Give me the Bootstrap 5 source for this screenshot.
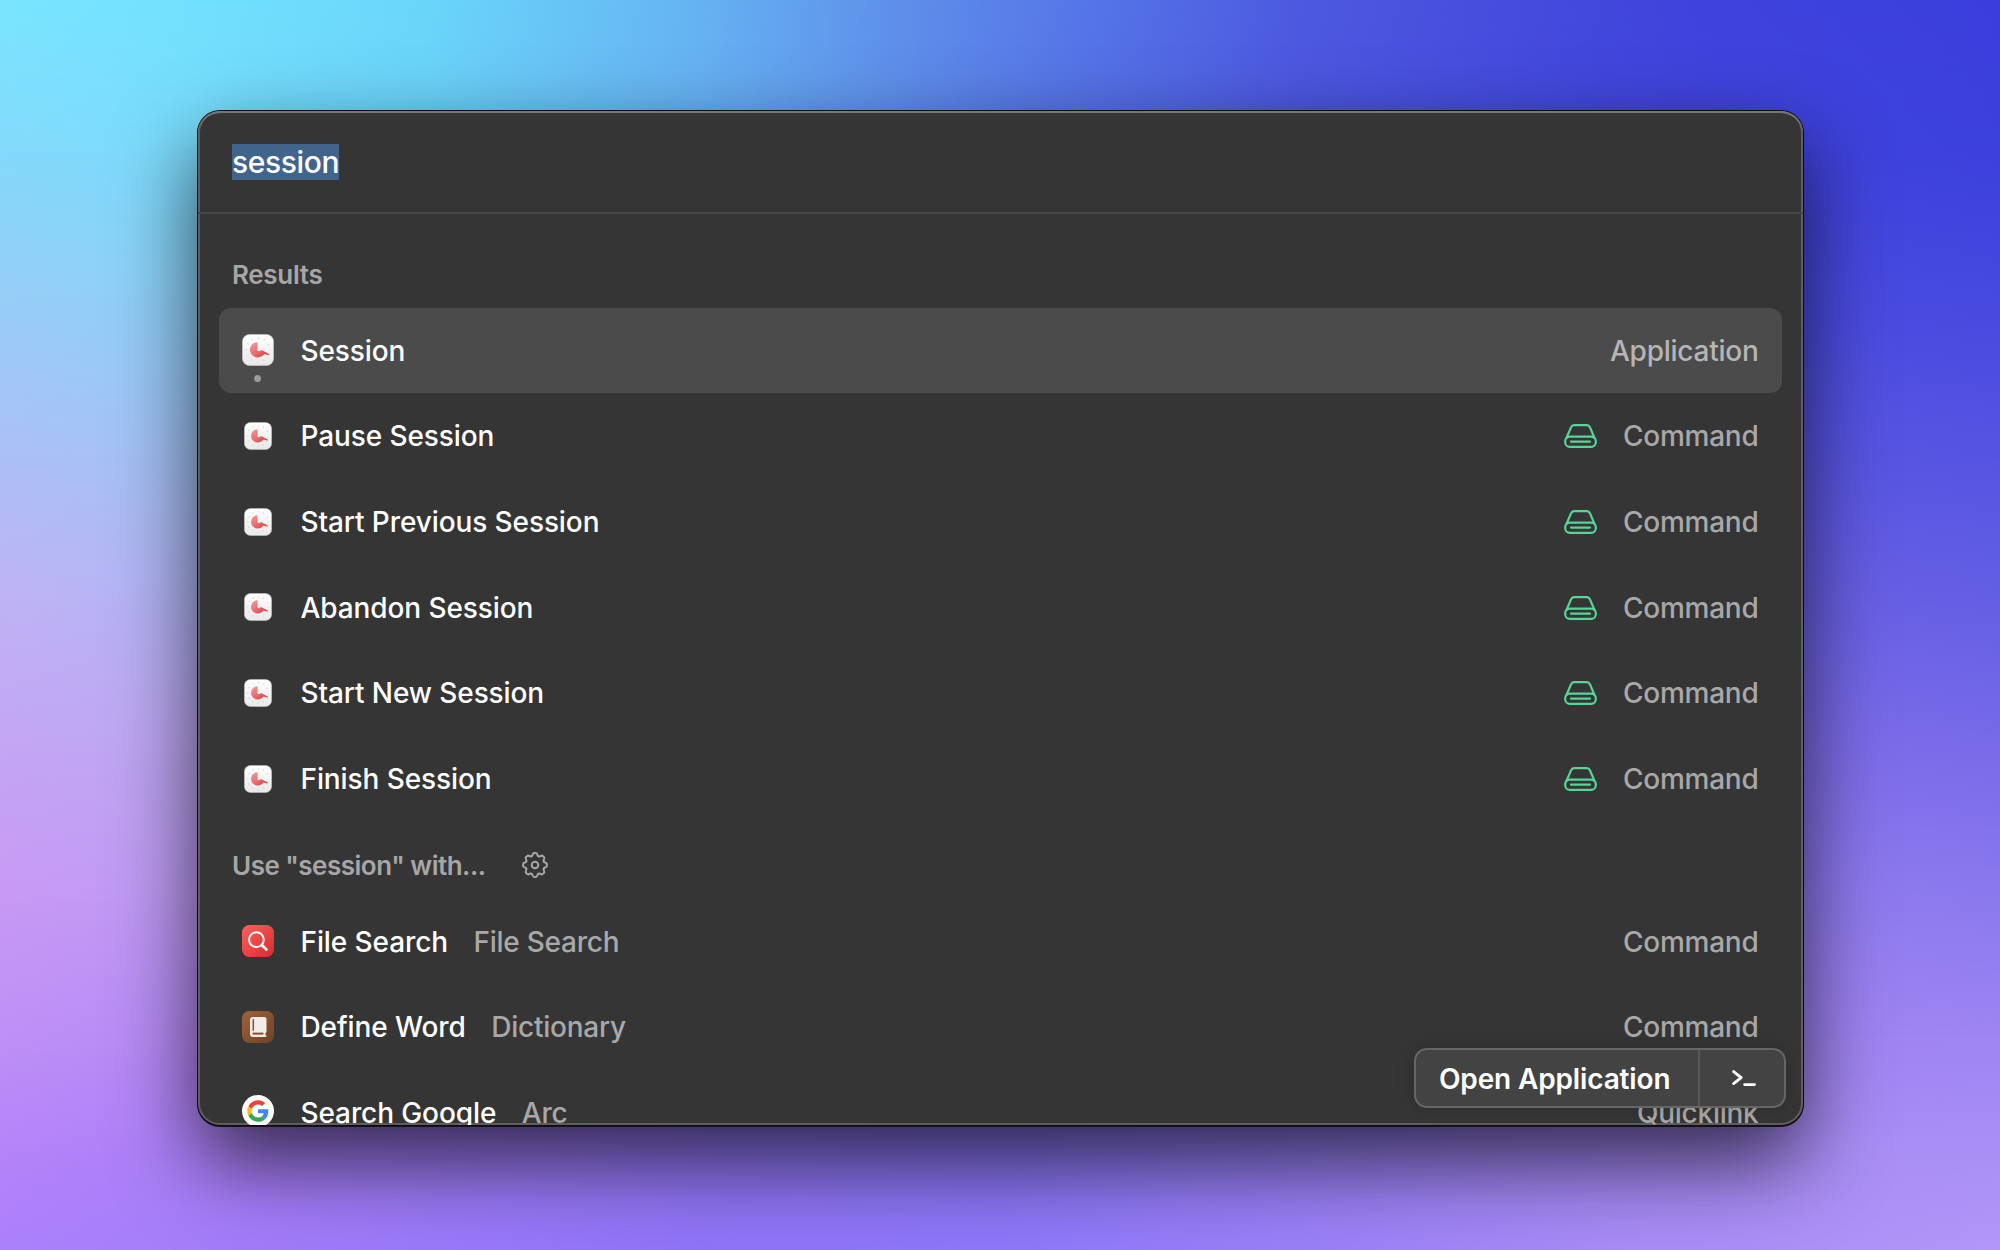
<!DOCTYPE html>
<html lang="en" data-bs-theme="dark">
<head>
<meta charset="utf-8">
<meta name="viewport" content="width=device-width, initial-scale=1">
<title>session</title>
<link href="https://cdn.jsdelivr.net/npm/bootstrap@5.3.0/dist/css/bootstrap.min.css" rel="stylesheet">
<style>
  body { font-family: Inter, "Liberation Sans", sans-serif; }
  .desktop { display: grid; width: 2000px; height: 1250px; }
  .desktop > * { grid-area: 1 / 1; }

  /* Wallpaper: horizontal gradients, each fading in below the previous one */
  .band { -webkit-mask-image: linear-gradient(transparent var(--from), #000 var(--to)); mask-image: linear-gradient(transparent var(--from), #000 var(--to)); }
  .band-0 { background: linear-gradient(90deg, #7ae5ff, #71e1fe 200px, #6ad6fa 430px, #66b6f3 680px, #5f8fea 900px, #5574e8 1100px, #4d5ae0 1300px, #474ddd 1500px, #4043dc 1700px, #3b3edc); }
  .band-1 { --from: 0px; --to: 150px; background: linear-gradient(90deg, #84d9fb, #7bdcfc 190px, #6cd0f8 430px, #67b0f2 700px, #5877e6 1030px, #4c55df 1300px, #4246dc 1600px, #3d40dc); }
  .band-2 { --from: 150px; --to: 300px; background: linear-gradient(90deg, #98cdf8, #8ed0f9 190px, #494be0 1820px, #4749df); }
  .band-3 { --from: 300px; --to: 450px; background: linear-gradient(90deg, #acc0f6, #a3c3f6 190px, #5855e2 1820px, #5554e2); }
  .band-4 { --from: 450px; --to: 600px; background: linear-gradient(90deg, #bfb2f4, #b3b5f6 190px, #6a60e5 1820px, #645fe4); }
  .band-5 { --from: 600px; --to: 750px; background: linear-gradient(90deg, #c4a5f4, #bda7f2 190px, #7e6de9 1820px, #796be9); }
  .band-6 { --from: 750px; --to: 900px; background: linear-gradient(90deg, #c899f4, #bd9af4 190px, #917bef 1820px, #8b7aee); }
  .band-7 { --from: 900px; --to: 1050px; background: linear-gradient(90deg, #bd8ff6, #b589f5 190px, #9378f6 700px, #8b76f5 1000px, #a085f2 1820px, #9f86f3); }
  .band-8 { --from: 1050px; --to: 1150px; background: linear-gradient(90deg, #b584f9, #ac80f8 190px, #9378f6 700px, #8b76f5 1000px, #a086f5 1500px, #aa8ef5 1830px, #a98ff5); }
  .band-9 { --from: 1150px; --to: 1250px; background: linear-gradient(90deg, #ab80fb, #a27cfa 250px, #8f74f8 700px, #8f77f9 1000px, #9a80f8 1300px, #a88bf5 1600px, #b396f8); }

  .launcher {
    width: 1605px; height: 1014px; margin: 111px 0 0 198px; border-radius: 22px; background: #353535;
    box-shadow: inset 0 2px #767674, inset 0 0 0 2px #5e5e5e, 0 0 0 1px #0d0d0d, 0 1px 0 1px #16131c, 0 36px 84px rgba(0,0,0,.7);
  }
  .search-bar { height: 102.5px; padding: 2px 34px 0; border-bottom: 2px solid #474747; }
  .query { font-size: 30px; line-height: 36px; font-weight: 500; letter-spacing: -.37px; color: #fff; background: #41648c; }
  .results { padding: 27px 21.5px 0 21px; }
  .section-title { height: 67px; padding: 1px 0 0 13px; gap: 36px; font-size: 26px; font-weight: 600; letter-spacing: -.32px; color: #a6a6a6; }
  .section-title.with-query { margin-top: 10px; letter-spacing: -.5px; }
  .result { height: 85.67px; padding: 0 23px 0 22.5px; font-size: 28px; line-height: 34px; font-weight: 500; letter-spacing: -.1px; color: #fff; border-radius: 12px; }
  .result > span:not(.app-icon) { padding-top: 1px; }
  .result.selected { background: #4b4b4b; }
  .app-icon { width: 32px; margin-right: 27px; }
  .muted { color: #a8a8a8; letter-spacing: -.25px; }
  .selected .muted { color: #b5b5b5; }
  .running { width: 7px; height: 7px; left: 12.5px; top: 41px; background: #9b9b9b; }
  .source { gap: 25.5px; }
  .kind { gap: 26.5px; }
  .action-bar { right: 17px; bottom: 17px; width: 372px; height: 60px; border: 2px solid #666; border-radius: 13px; background: #434343; box-shadow: 0 0 18px rgba(0,0,0,.16); color: #fff; font-size: 28px; font-weight: 600; letter-spacing: -.15px; }
  .action-main { width: 284px; padding: 1px 0 0 23px; border-right: 2px solid #595959; }
</style>
</head>
<body>
<svg class="position-absolute" width="0" height="0" aria-hidden="true">
  <defs>
    <linearGradient id="g-white" x2="0" y2="1"><stop stop-color="#fff"/><stop offset="1" stop-color="#e9e9e9"/></linearGradient>
    <linearGradient id="g-comma" x2="1" y2="1"><stop stop-color="#f0a09f"/><stop offset=".55" stop-color="#e8686a"/><stop offset="1" stop-color="#e0282c"/></linearGradient>
    <linearGradient id="g-red" x2="1" y2="1"><stop stop-color="#ff6060"/><stop offset="1" stop-color="#d32c2f"/></linearGradient>
    <linearGradient id="g-brown" x2="1" y2="1"><stop stop-color="#a0623a"/><stop offset="1" stop-color="#6e4326"/></linearGradient>
  </defs>
  <symbol id="i-session" viewBox="0 0 32 32">
    <rect x=".5" y=".5" width="31" height="31" rx="7" fill="url(#g-white)" stroke="#c9c9c9" stroke-width=".6"/>
    <circle cx="16" cy="16" r="11.8" fill="none" stroke="#cfcfcf" stroke-width="1.8" stroke-dasharray=".9 5.28" stroke-dashoffset=".45"/>
    <path d="M15.4 8.2C10.9 8.4 8 11.8 8 15.8c0 4.4 3.4 7.6 7.6 7.6 3.2 0 5.6-1.5 6.7-3.3l4.6.9c.6.1.7-.6.1-.9l-7.4-4-2.4 1.2c-1.7.2-2.3-1.6-1.6-2.7z" fill="url(#g-comma)"/>
  </symbol>
  <symbol id="i-drive" viewBox="0 0 33 24">
    <g fill="none" stroke="#59d499" stroke-width="2.2" stroke-linecap="round" stroke-linejoin="round">
      <rect x="1.2" y="12.6" width="30.6" height="10.2" rx="4.6"/>
      <path d="M2.6 13.8 7 3.4C7.7 1.9 8.4 1.2 10 1.2h13c1.6 0 2.3.7 3 2.2l4.4 10.4M7 17.6h19"/>
    </g>
  </symbol>
  <symbol id="i-gear" viewBox="-13 -13 26 26">
    <g fill="none" stroke="#a6a6a6" stroke-width="2" stroke-linecap="round">
      <g id="teeth"><path id="tooth" d="M-3.6-8.7C-2.6-9.1-2.4-9.6-2.2-10.6Q-1.9-11.9-.7-11.9H.7Q1.9-11.9 2.2-10.6C2.4-9.6 2.6-9.1 3.6-8.7"/>
      <use href="#tooth" transform="rotate(45)"/><use href="#tooth" transform="rotate(90)"/><use href="#tooth" transform="rotate(135)"/></g>
      <use href="#teeth" transform="rotate(180)"/>
      <circle r="3.3"/>
    </g>
  </symbol>
  <symbol id="i-file" viewBox="0 0 32 32">
    <rect width="32" height="32" rx="7.5" fill="url(#g-red)"/>
    <g fill="none" stroke="#fff" stroke-linecap="round"><circle cx="14.4" cy="14.6" r="7.4" stroke-width="2"/><path d="m20 20.2 4.4 4.2" stroke-width="2.8"/></g>
  </symbol>
  <symbol id="i-book" viewBox="0 0 32 32">
    <rect width="32" height="32" rx="7.5" fill="url(#g-brown)"/>
    <path d="M11 6h11.5a2 2 0 0 1 2 2v12.5a2 2 0 0 1-1 1.6v2.1c.8.1 1 .4 1 .9s-.3.9-1 .9H11a3 3 0 0 1-3-3V9a3 3 0 0 1 3-3z" fill="#f3ece7"/>
    <path d="M11.3 8.2v11.6" stroke="#85502e" stroke-width="1.5"/>
    <path d="M10.6 22.6h10.8" stroke="#85502e" stroke-width="2"/>
  </symbol>
  <symbol id="i-google" viewBox="0 0 32 32">
    <circle cx="16" cy="16" r="16" fill="#fff"/>
    <g transform="translate(5.2 5.2) scale(.45)">
      <path fill="#EA4335" d="M24 9.5c3.54 0 6.71 1.22 9.21 3.6l6.85-6.85C35.9 2.38 30.47 0 24 0 14.62 0 6.51 5.38 2.56 13.22l7.98 6.19C12.43 13.72 17.74 9.5 24 9.5z"/>
      <path fill="#4285F4" d="M46.98 24.55c0-1.57-.15-3.09-.38-4.55H24v9.02h12.94c-.58 2.96-2.26 5.48-4.78 7.18l7.73 6c4.51-4.18 7.09-10.36 7.09-17.65z"/>
      <path fill="#FBBC05" d="M10.53 28.59c-.48-1.45-.76-2.99-.76-4.59s.27-3.14.76-4.59l-7.98-6.19C.92 16.46 0 20.12 0 24c0 3.88.92 7.54 2.56 10.78l7.97-6.19z"/>
      <path fill="#34A853" d="M24 48c6.48 0 11.93-2.13 15.89-5.81l-7.73-6c-2.15 1.45-4.92 2.3-8.16 2.3-6.26 0-11.57-4.22-13.47-9.91l-7.98 6.19C6.51 42.62 14.62 48 24 48z"/>
    </g>
  </symbol>
</svg>

<main class="desktop overflow-hidden">
  <div class="band-0"></div>
  <div class="band band-1"></div>
  <div class="band band-2"></div>
  <div class="band band-3"></div>
  <div class="band band-4"></div>
  <div class="band band-5"></div>
  <div class="band band-6"></div>
  <div class="band band-7"></div>
  <div class="band band-8"></div>
  <div class="band band-9"></div>

  <section class="launcher position-relative overflow-hidden">
    <header class="search-bar d-flex align-items-center"><span class="query">session</span></header>

    <div class="results">
      <div class="section-title d-flex align-items-center">Results</div>
      <div class="result selected d-flex align-items-center">
        <span class="app-icon position-relative d-flex justify-content-center"><svg width="32" height="32"><use href="#i-session"/></svg><i class="running position-absolute rounded-circle"></i></span>
        <span>Session</span><span class="muted ms-auto">Application</span>
      </div>
      <div class="result d-flex align-items-center">
        <span class="app-icon d-flex justify-content-center"><svg width="28" height="28"><use href="#i-session"/></svg></span>
        <span>Pause Session</span><span class="kind muted ms-auto d-flex align-items-center"><svg width="33" height="24"><use href="#i-drive"/></svg>Command</span>
      </div>
      <div class="result d-flex align-items-center">
        <span class="app-icon d-flex justify-content-center"><svg width="28" height="28"><use href="#i-session"/></svg></span>
        <span>Start Previous Session</span><span class="kind muted ms-auto d-flex align-items-center"><svg width="33" height="24"><use href="#i-drive"/></svg>Command</span>
      </div>
      <div class="result d-flex align-items-center">
        <span class="app-icon d-flex justify-content-center"><svg width="28" height="28"><use href="#i-session"/></svg></span>
        <span>Abandon Session</span><span class="kind muted ms-auto d-flex align-items-center"><svg width="33" height="24"><use href="#i-drive"/></svg>Command</span>
      </div>
      <div class="result d-flex align-items-center">
        <span class="app-icon d-flex justify-content-center"><svg width="28" height="28"><use href="#i-session"/></svg></span>
        <span>Start New Session</span><span class="kind muted ms-auto d-flex align-items-center"><svg width="33" height="24"><use href="#i-drive"/></svg>Command</span>
      </div>
      <div class="result d-flex align-items-center">
        <span class="app-icon d-flex justify-content-center"><svg width="28" height="28"><use href="#i-session"/></svg></span>
        <span>Finish Session</span><span class="kind muted ms-auto d-flex align-items-center"><svg width="33" height="24"><use href="#i-drive"/></svg>Command</span>
      </div>

      <div class="section-title with-query d-flex align-items-center">Use "session" with...<svg width="26" height="26"><use href="#i-gear"/></svg></div>
      <div class="result d-flex align-items-center">
        <span class="app-icon d-flex"><svg width="32" height="32"><use href="#i-file"/></svg></span>
        <span class="source d-flex"><span>File Search</span><span class="muted">File Search</span></span><span class="muted ms-auto">Command</span>
      </div>
      <div class="result d-flex align-items-center">
        <span class="app-icon d-flex"><svg width="32" height="32"><use href="#i-book"/></svg></span>
        <span class="source d-flex"><span>Define Word</span><span class="muted">Dictionary</span></span><span class="muted ms-auto">Command</span>
      </div>
      <div class="result d-flex align-items-center">
        <span class="app-icon d-flex pb-1"><svg width="32" height="32"><use href="#i-google"/></svg></span>
        <span class="source d-flex"><span>Search Google</span><span class="muted">Arc</span></span><span class="muted ms-auto">Quicklink</span>
      </div>
    </div>

    <div class="action-bar position-absolute d-flex align-items-stretch">
      <div class="action-main d-flex align-items-center text-nowrap">Open Application</div>
      <div class="flex-fill d-flex align-items-center justify-content-center ps-1">
        <svg width="26" height="18" viewBox="0 0 26 18" fill="none" stroke="#fff" stroke-width="2.8" stroke-linecap="round" stroke-linejoin="round"><path d="m2.6 2.6 7.6 6-7.6 6"/><path d="M13.6 15.6h10" stroke-width="2.6"/></svg>
      </div>
    </div>
  </section>
</main>
<script src="https://cdn.jsdelivr.net/npm/bootstrap@5.3.0/dist/js/bootstrap.bundle.min.js"></script>
</body>
</html>
